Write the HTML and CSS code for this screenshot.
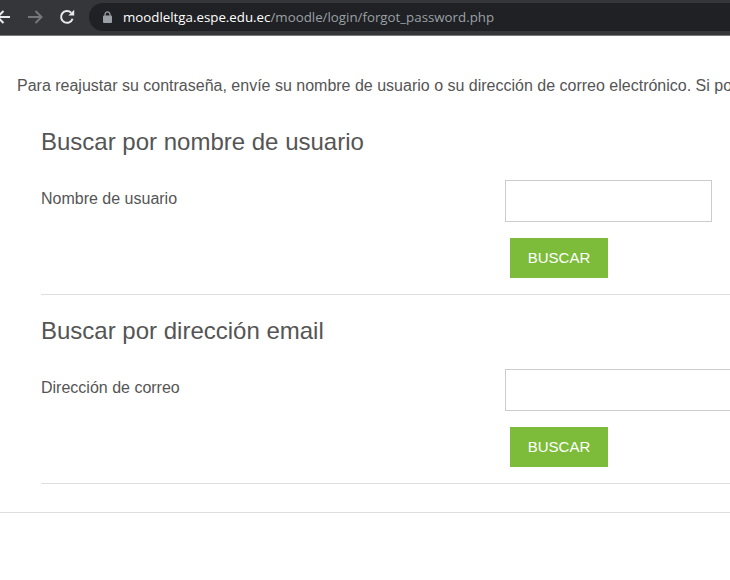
FILE: index.html
```
<!DOCTYPE html>
<html lang="es">
<head>
<meta charset="utf-8">
<title>Contraseña olvidada</title>
<link rel="stylesheet" href="styles.css">
</head>
<body>
<header class="toolbar">
  <div class="nav">
    <svg class="back" width="14" height="14" viewBox="0 0 14 14"><path d="M14 7H1.5M7.5 1L1.5 7l6 6" fill="none" stroke="#e8eaed" stroke-width="2"/></svg>
    <svg class="forward" width="15" height="14" viewBox="0 0 15 14"><path d="M0 7h13M7.5 1l6 6-6 6" fill="none" stroke="#75777a" stroke-width="2"/></svg>
    <svg class="reload" width="16" height="16" viewBox="0 0 16 16"><path d="M13.6 9.8A5.9 5.9 0 1 1 12.2 3.8" fill="none" stroke="#e8eaed" stroke-width="2"/><path d="M9.4 6.6H15.2V.8z" fill="#e8eaed"/></svg>
  </div>
  <div class="address">
    <svg class="lock" width="9" height="12" viewBox="0 0 9 12"><path d="M2 5V3.4a2.5 2.5 0 0 1 5 0V5" fill="none" stroke="#9aa0a6" stroke-width="1.2"/><rect y="4.6" width="9" height="7.4" rx="1" fill="#9aa0a6"/></svg>
    <span class="url"><span class="host">moodleltga.espe.edu.ec</span>/moodle/login/forgot_password.php</span>
  </div>
</header>
<main class="page">
  <p class="intro">Para reajustar su contraseña, envíe su nombre de usuario o su dirección de correo electrónico. Si podemos encontrarlo en la base de datos, le enviaremos un email con instrucciones.</p>
  <section class="search">
    <h2 class="search-title">Buscar por nombre de usuario</h2>
    <div class="field">
      <label class="field-label" for="username">Nombre de usuario</label>
      <div class="field-control">
        <input class="text-input short" id="username" type="text">
        <button class="btn" type="button">BUSCAR</button>
      </div>
    </div>
  </section>
  <section class="search">
    <h2 class="search-title">Buscar por dirección email</h2>
    <div class="field">
      <label class="field-label" for="email">Dirección de correo</label>
      <div class="field-control">
        <input class="text-input" id="email" type="text">
        <button class="btn" type="button">BUSCAR</button>
      </div>
    </div>
  </section>
  <hr class="page-rule">
</main>
</body>
</html>
```
FILE: styles.css
```
* { box-sizing: border-box; }
html, body { margin: 0; height: 100%; overflow: hidden; background: #fff; }
body { font-family: "Liberation Sans", Arial, sans-serif; color: #555; width: 730px; }
.toolbar { height: 36px; background: #35363a; border-bottom: 1px solid #77787a; display: flex; align-items: flex-start; padding-top: 3px; }
.nav { width: 89px; height: 28px; flex: none; display: flex; align-items: center; overflow: hidden; }
.back { margin-left: -4px; flex: none; }
.forward { margin-left: 18px; flex: none; }
.reload { margin-left: 16px; flex: none; }
.address { flex: 1; height: 28px; background: #202124; border-radius: 14px 0 0 14px; display: flex; align-items: center; padding-left: 14px; }
.lock { flex: none; }
.url { margin-left: 11px; font-family: "Open Sans", "Noto Sans", sans-serif; font-size: 13.3px; color: #9aa0a6; white-space: nowrap; }
.host { color: #fff; }
.page { padding-top: 40px; }
.intro { margin: 0 0 10px 17px; font-size: 16px; line-height: 20px; white-space: nowrap; }
.search { margin-left: 41px; border-bottom: 1px solid #dedede; padding-bottom: 16px; }
.search-title { margin: 0; padding-top: 22px; font-size: 24px; font-weight: 400; line-height: 28px; }
.field { display: flex; margin-top: 24px; }
.field-label { width: 464px; flex: none; font-size: 16px; line-height: 20px; padding-top: 9px; }
.field-control { flex: 1; display: flex; flex-direction: column; align-items: flex-start; }
.text-input { display: block; width: 240px; height: 42px; border: 1px solid #ccc; background: #fff; padding: 0; flex: none; }
.text-input.short { width: 207px; }
.btn { margin: 16px 0 0 5px; width: 98px; height: 40px; border: 0; background: #7cbc3a; color: #fff; font: 400 15px "Liberation Sans", Arial, sans-serif; padding: 0 0 2px; }
.page-rule { margin: 28px 0 0; border: 0; border-top: 1px solid #dedede; }
```
